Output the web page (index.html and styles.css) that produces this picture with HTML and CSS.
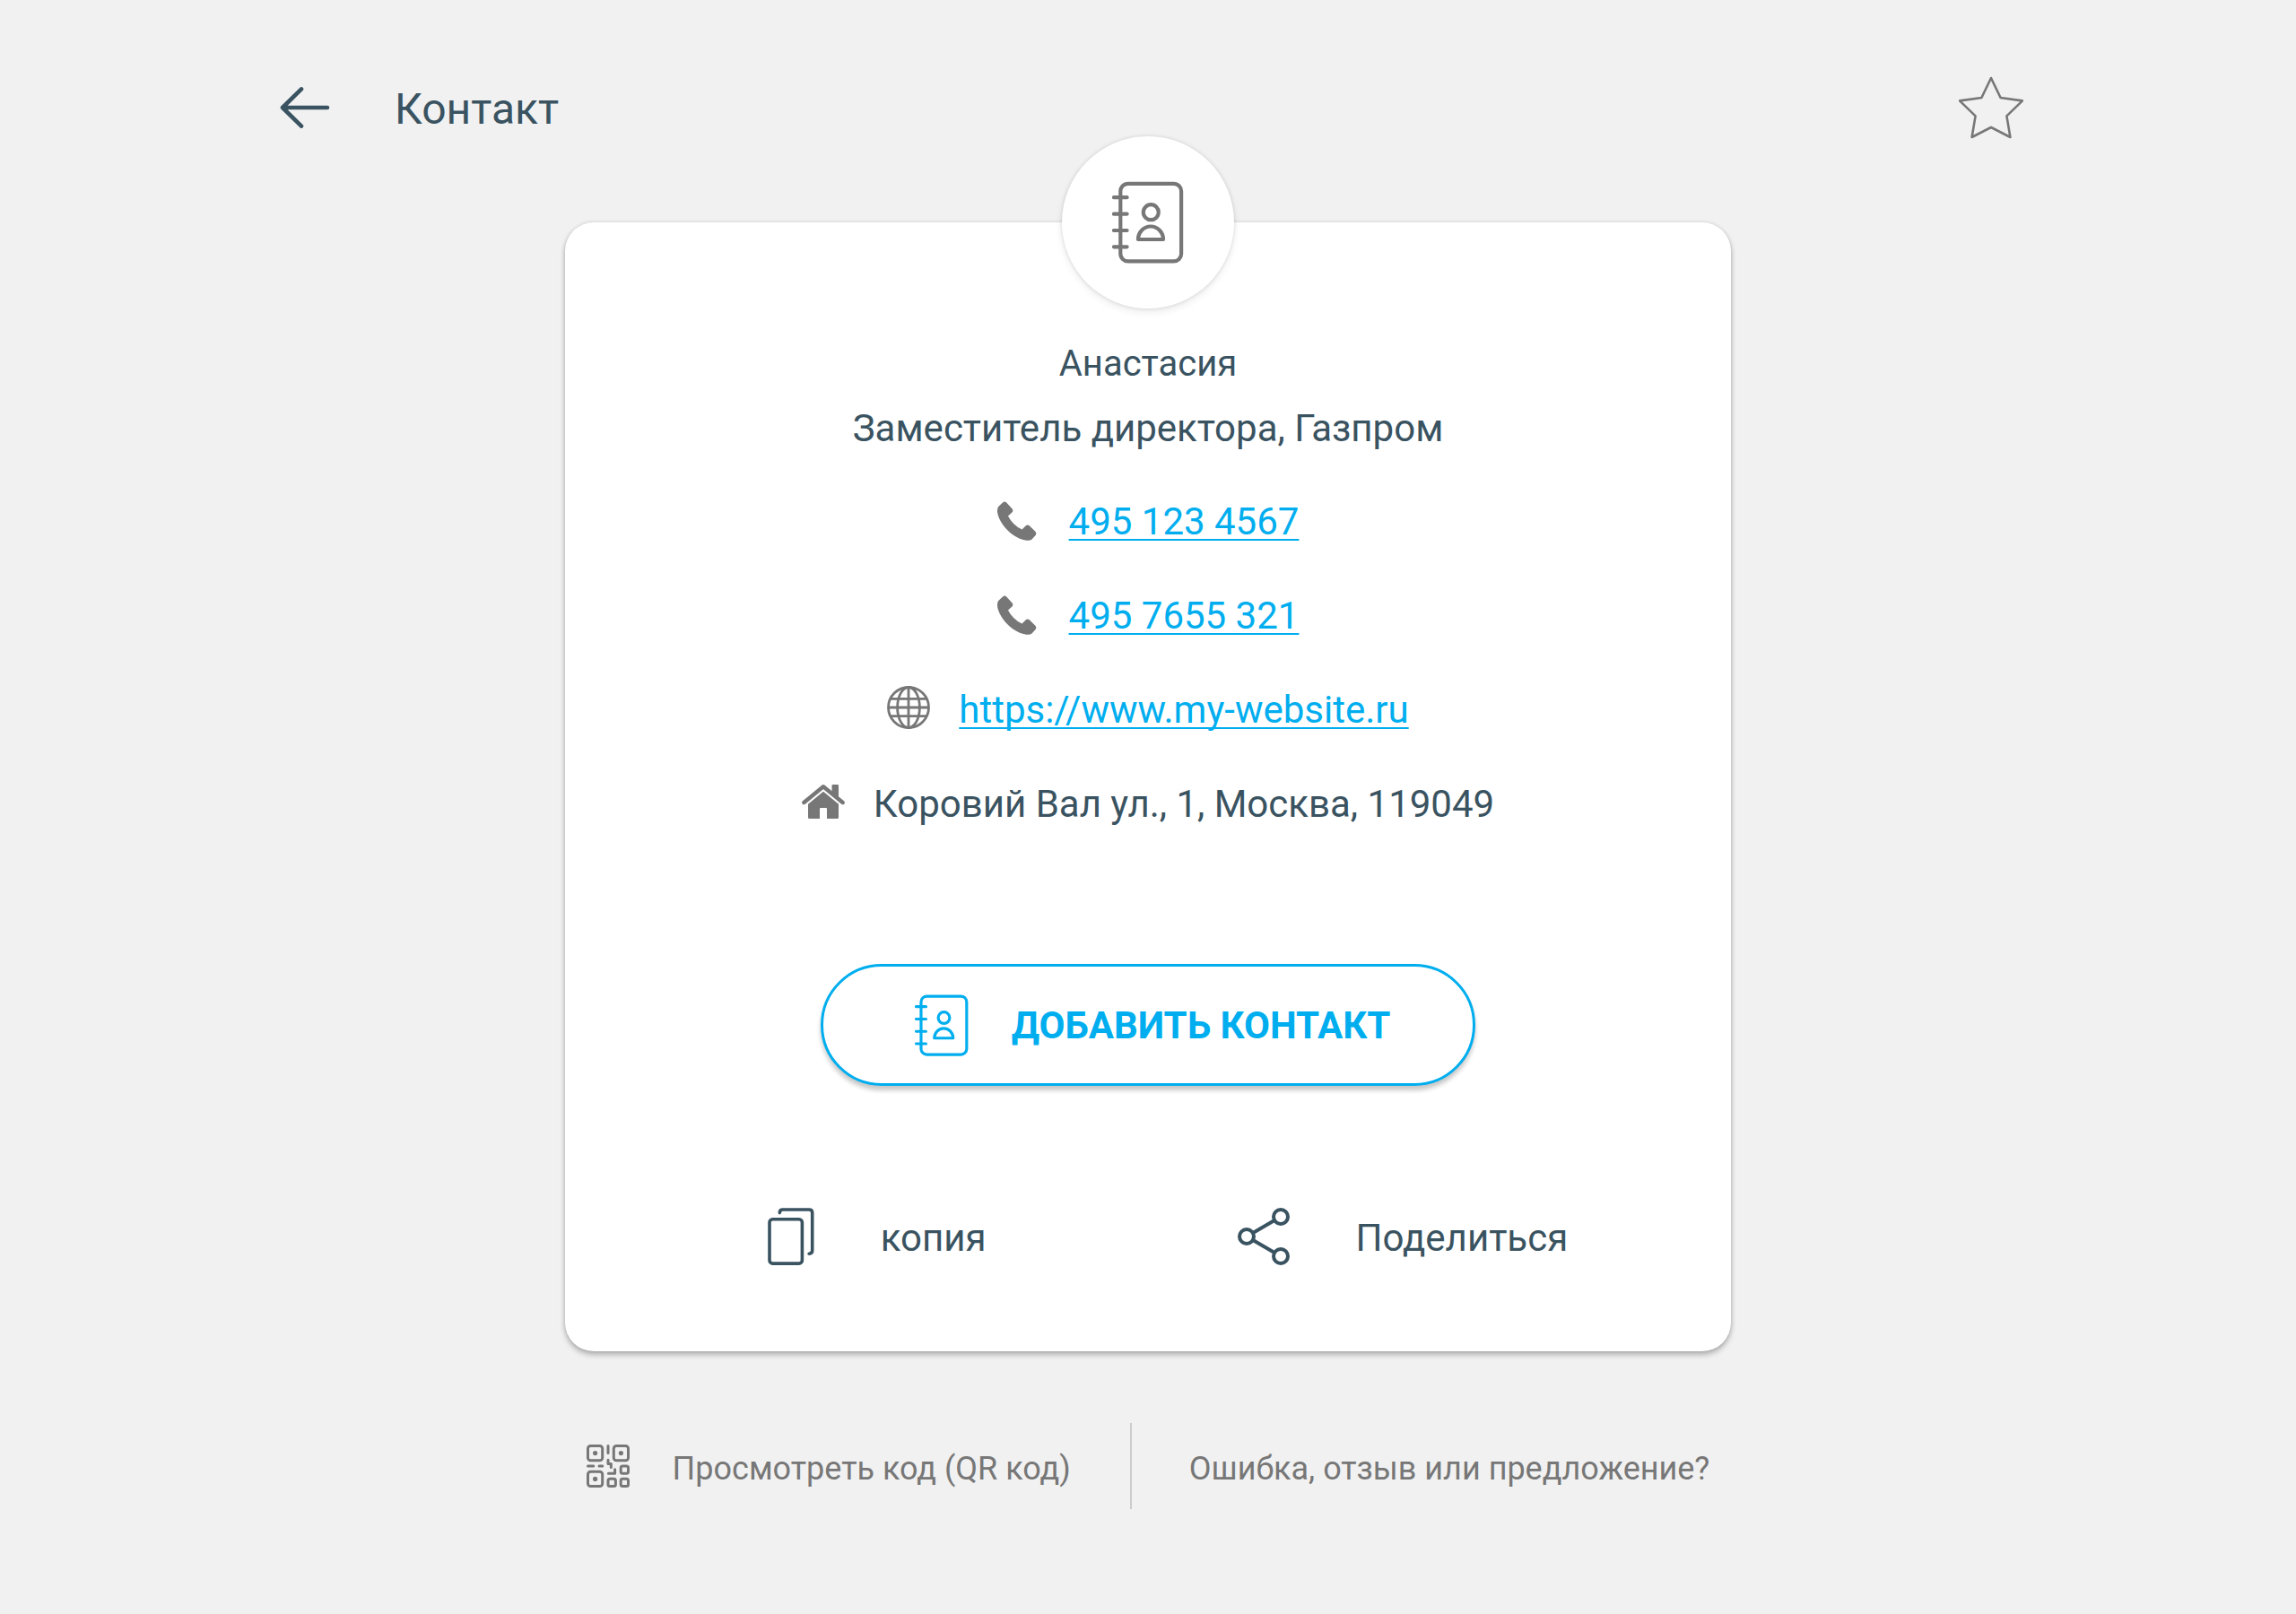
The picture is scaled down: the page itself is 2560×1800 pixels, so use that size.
FILE: index.html
```html
<!DOCTYPE html>
<html lang="ru">
<head>
  <meta charset="UTF-8">
  <meta name="viewport" content="width=device-width, initial-scale=1">
  <title>Контакт</title>
  <link rel="stylesheet" href="styles.css">
</head>
<body>
  <!-- icons used more than once -->
  <svg class="sprite" aria-hidden="true">
    <symbol id="book" viewBox="0 0 80 92">
      <g fill="none" stroke="currentColor" stroke-width="4.2" stroke-linecap="round" stroke-linejoin="round">
        <rect x="9.3" y="2.8" width="67.8" height="86.6" rx="8.5"/>
        <path d="M2 18.2h14.6M2 36.6h14.6M2 55h14.6M2 73.3h14.6"/>
        <circle cx="43.3" cy="34.7" r="8.5"/>
        <path d="M29 65a13.8 14.3 0 0 1 28 0z"/>
      </g>
    </symbol>
    <symbol id="phone" viewBox="0 0 48 48">
      <path fill="currentColor" d="M1.2 10L6 5.4Q8.2 3.7 10.2 5.4L16.6 12.6Q18 14.5 16.6 16.3L12 20.5Q17 30.5 27.5 35.6L31.8 31.3Q34 29.8 36 31.5L42.6 38Q44 40 42.6 42L38.5 46.6Q37 48 33 47.8C18 46 2 30 0 16Q-.2 12 1.2 10z"/>
    </symbol>
  </svg>

  <header class="topbar">
    <button class="icon-btn" type="button" aria-label="Назад">
      <svg width="56" height="46" viewBox="0 0 56 46" fill="none" stroke="currentColor" stroke-width="4.6" stroke-linecap="round" stroke-linejoin="round">
        <path d="M53 23H3M24 2.4L3 23l21 20.6"/>
      </svg>
    </button>
    <h1 class="title">Контакт</h1>
    <button class="icon-btn star" type="button" aria-label="В избранное">
      <svg width="72" height="70" viewBox="0 0 72 70" fill="none" stroke="currentColor" stroke-width="2.6" stroke-linejoin="round">
        <path d="M36 2l10.6 22L71 27.4 53.4 44.4 57.4 68 36 57 14.6 68l4-23.6L1 27.4l24.4-3.4z"/>
      </svg>
    </button>
  </header>

  <main class="card">
    <div class="badge">
      <svg width="80" height="92"><use href="#book"/></svg>
    </div>

    <h2 class="name">Анастасия</h2>
    <p class="job">Заместитель директора, Газпром</p>

    <ul class="details">
      <li>
        <svg width="48" height="48"><use href="#phone"/></svg>
        <a href="tel:4951234567">495 123 4567</a>
      </li>
      <li>
        <svg width="48" height="48"><use href="#phone"/></svg>
        <a href="tel:4957655321">495 7655 321</a>
      </li>
      <li>
        <svg width="48" height="48" viewBox="0 0 48 48" fill="none" stroke="currentColor" stroke-width="2.8">
          <circle cx="24" cy="24" r="22.5"/>
          <ellipse cx="24" cy="24" rx="12.4" ry="22.5"/>
          <path d="M24 1v46M1.5 24h45M4 14.3h40M4 33.7h40"/>
        </svg>
        <a href="https://www.my-website.ru">https://www.my-website.ru</a>
      </li>
      <li>
        <svg width="48" height="48" viewBox="0 0 48 48" fill="currentColor">
          <path d="M33.5 6q0-1 1-1H40q1 0 1 1v15l-7.5-6z"/>
          <path d="M2.4 25L24 7.2 45.6 25" fill="none" stroke="currentColor" stroke-width="4.4" stroke-linecap="round" stroke-linejoin="round"/>
          <path d="M24 12.8L41 26.8V41.5q0 1.5-1.5 1.5H28V32q0-1-1-1h-6q-1 0-1 1v11H8.5Q7 43 7 41.5V26.8z"/>
        </svg>
        <span>Коровий Вал ул., 1, Москва, 119049</span>
      </li>
    </ul>

    <button class="add-btn" type="button">
      <svg width="60" height="69"><use href="#book"/></svg>
      ДОБАВИТЬ КОНТАКТ
    </button>

    <div class="actions">
      <button class="action" type="button">
        <svg width="52" height="64" viewBox="0 0 52 64" fill="none" stroke="currentColor" stroke-width="3.6" stroke-linecap="round" stroke-linejoin="round">
          <rect x="2" y="12.7" width="36.4" height="49.4" rx="3.5"/>
          <path d="M13.3 5.6q0-3.6 3.6-3.6h29.2q3.6 0 3.6 3.6v42q0 3.6-3.6 3.6"/>
        </svg>
        <span class="label">копия</span>
      </button>
      <button class="action" type="button">
        <svg width="58" height="64" viewBox="0 0 58 64" fill="none" stroke="currentColor" stroke-width="4">
          <circle cx="10" cy="32" r="8"/>
          <circle cx="48" cy="10" r="8"/>
          <circle cx="48" cy="54" r="8"/>
          <path d="M17 28l24-14M17 36l24 14"/>
        </svg>
        <span class="label">Поделиться</span>
      </button>
    </div>
  </main>

  <footer class="footer">
    <a class="footer-link" href="#qr">
      <svg width="48" height="48" viewBox="0 0 48 48" fill="none" stroke="currentColor" stroke-width="3" stroke-linecap="round" stroke-linejoin="round">
        <rect x="1.5" y="1.5" width="16.2" height="16.2" rx="3"/>
        <rect x="30.3" y="1.5" width="16.2" height="16.2" rx="3"/>
        <rect x="1.5" y="30.3" width="16.2" height="16.2" rx="3"/>
        <rect x="38.2" y="23.9" width="8.3" height="8.4" rx="2"/>
        <rect x="24" y="38.2" width="8.4" height="8.3" rx="2"/>
        <rect x="38.2" y="38.2" width="8.3" height="8.3" rx="2"/>
        <path d="M24 1.5v8M1.5 23.9h6.3M14 23.9h3.8M24 17.2v4.2h3.3v4M24.4 32.3h7.2v-4.5"/>
        <g fill="currentColor" stroke="none">
          <circle cx="9.6" cy="9.6" r="2.6"/>
          <circle cx="38.4" cy="9.6" r="2.6"/>
          <circle cx="9.6" cy="38.4" r="2.6"/>
        </g>
      </svg>
      <span class="label">Просмотреть код (QR код)</span>
    </a>
    <a class="footer-link" href="#feedback">
      <span class="label">Ошибка, отзыв или предложение?</span>
    </a>
  </footer>
</body>
</html>
```

FILE: styles.css
```css
* {
  box-sizing: border-box;
}
body {
  margin: 0;
  font-family: Roboto, sans-serif;
  font-size: 42px;
  background-color: #f1f1f1;
  color: #3a5361;
}
svg {
  display: block;
  flex-shrink: 0;
}
.sprite {
  position: absolute;
  width: 0;
  height: 0;
}
button {
  font: inherit;
  color: inherit;
  background: none;
  border: none;
  padding: 0;
  cursor: pointer;
}

.topbar {
  display: flex;
  align-items: center;
  gap: 72px;
  padding: 72px 304px 0 312px;
}
.icon-btn {
  display: flex;
  align-items: center;
  height: 96px;
}
.title {
  margin: 0;
  padding-top: 2px;
  font-size: 48px;
  font-weight: 400;
}
.star {
  margin-left: auto;
  color: #777;
}

.card {
  display: flex;
  flex-direction: column;
  align-items: center;
  max-width: 1300px;
  margin: 80px auto 0;
  padding-bottom: 96px;
  background-color: #fff;
  border-radius: 32px;
  box-shadow: 0 4px 6px rgba(0, 0, 0, 0.26), 0 0 4px rgba(0, 0, 0, 0.12);
}
.badge {
  display: flex;
  align-items: center;
  justify-content: center;
  width: 192px;
  height: 192px;
  margin-top: -96px;
  border-radius: 50%;
  background-color: #fff;
  color: #777;
  box-shadow: 0 4px 8px rgba(0, 0, 0, 0.08), 0 0 4px rgba(0, 0, 0, 0.12);
}
.name {
  margin: 26px 0 0;
  font-size: 40px;
  font-weight: 400;
  line-height: 72px;
}
.job {
  margin: 0;
  line-height: 72px;
}

.details {
  display: flex;
  flex-direction: column;
  align-items: center;
  gap: 56px;
  list-style: none;
  margin: 43px 0 0;
  padding: 0;
  line-height: 49px;
}
.details li {
  display: flex;
  align-items: center;
  gap: 32px;
}
.details svg {
  margin-top: -6px;
  color: #777;
}
.details a {
  color: #00aeef;
  text-decoration-thickness: 2px;
  text-underline-offset: 5px;
  text-decoration-skip-ink: none;
}

.add-btn {
  display: flex;
  align-items: center;
  gap: 48px;
  height: 136px;
  margin-top: 154px;
  padding: 0 92px 0 102px;
  border: 3px solid #00aeef;
  border-radius: 68px;
  background-color: #fff;
  color: #00aeef;
  font-weight: 700;
  box-shadow: 0 5px 5px rgba(0, 0, 0, 0.22);
}

.actions {
  display: flex;
  gap: 280px;
  margin-top: 136px;
  padding-left: 44px;
}
.action {
  display: flex;
  align-items: center;
  gap: 74px;
}
.label {
  padding-top: 3px;
}

.footer {
  display: flex;
  justify-content: center;
  margin-top: 80px;
  padding-bottom: 80px;
}
.footer-link {
  display: flex;
  align-items: center;
  gap: 48px;
  height: 96px;
  color: #777;
  font-size: 36px;
  text-decoration: none;
}
.footer-link .label {
  padding-top: 5px;
}
.footer-link + .footer-link {
  margin-left: 66px;
  padding-left: 64px;
  border-left: 2px solid #ccc;
}
```
